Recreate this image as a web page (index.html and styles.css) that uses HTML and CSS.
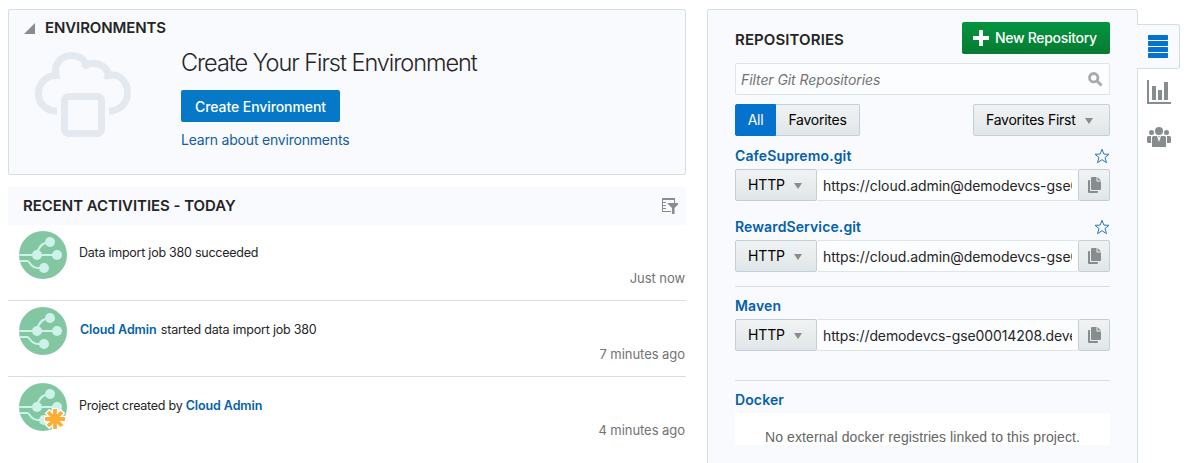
FILE: index.html
```html
<!DOCTYPE html>
<html lang="en">
<head>
<meta charset="utf-8">
<title>Project Home</title>
<link rel="stylesheet" href="styles.css">
</head>
<body>
<svg class="defs" width="0" height="0" aria-hidden="true">
  <symbol id="activity" viewBox="0 0 48 48">
    <circle cx="24" cy="24" r="24" fill="#83c7a2"/>
    <g fill="none" stroke="#cdf2e9" stroke-width="2">
      <path d="M0.2 24H38M18 24C19 16 23 11.500 31 11M0.800 30H8.500C11 30 11 37 19 37H25"/>
    </g>
    <g fill="#cdf2e9"><circle cx="18" cy="24" r="5"/><circle cx="38" cy="24" r="5"/><circle cx="31" cy="11" r="5"/><circle cx="25" cy="37" r="5"/></g>
  </symbol>
  <symbol id="star" viewBox="0 0 16 16">
    <path d="M8 1.300L9.900 6.100L15 6.300L11 9.500L12.500 14.700L8 11.700L3.500 14.700L5 9.500L1 6.300L6.100 6.100Z" fill="none" stroke="#2b78b5" stroke-width="1"/>
  </symbol>
  <symbol id="copy" viewBox="0 0 13 16">
    <path d="M3 1Q3 0 4 0H8.500V4.500H13V12Q13 13 12 13H4Q3 13 3 12ZM9.500 0L13 3.500H9.500ZM0 4Q0 3 1 3H2V14H10V15Q10 16 9 16H1Q0 16 0 15Z" fill="#878c8e"/>
  </symbol>
</svg>
<div class="page">
  <main class="main">
    <section class="environments">
      <h2 class="heading env-heading"><svg class="disclosure" width="11" height="11" viewBox="0 0 11 11"><path d="M11 0V11H0Z" fill="#878c8e"/></svg><span>ENVIRONMENTS</span></h2>
      <div class="env-body">
        <svg class="cloud" width="98" height="88" viewBox="0 0 98 88">
          <g fill="none" stroke="#e4e9ef" stroke-width="7">
            <path d="M23 60C11 60 4.500 52 4.500 42.500C4.500 32 12.500 24.500 22 24.500C19 12 28 4.500 38 4.500C45 4.500 50 8.500 52.500 14C61 10 73 14 74.500 24.500C86 22 93.500 31 93.500 42C93.500 52 86 60 75 60"/>
            <path d="M22 28C19.500 22 19 18 21 14M48.500 16C52 13 56 12.500 59 12.500M70 27.500C73 24 77 23.500 80 24.500" stroke-width="3"/>
            <rect x="30.500" y="45.500" width="37" height="37" rx="4"/>
          </g>
        </svg>
        <div class="env-copy">
          <h1 class="env-title">Create Your First Environment</h1>
          <button class="btn-create">Create Environment</button>
          <a class="learn">Learn about environments</a>
        </div>
      </div>
    </section>
    <section>
      <header class="activity-header">
        <h2 class="heading recent">RECENT ACTIVITIES - TODAY</h2>
        <svg width="16" height="16" viewBox="0 0 16 16"><g fill="#878c8e"><path d="M0 0H13V5H12V2H1V13H9V14H0Z"/><path d="M1 4H4V5H1ZM1 7H4V8H1ZM1 10H4V11H1Z"/><path d="M5.500 5H16V6.500L12.500 10V16H10V10L5.500 5.500Z"/></g></svg>
      </header>
      <article class="activity">
        <svg class="avatar"><use href="#activity"/></svg>
        <p class="message">Data import job 380 succeeded</p>
        <time class="when">Just now</time>
      </article>
      <article class="activity">
        <svg class="avatar"><use href="#activity"/></svg>
        <p class="message author-first"><a class="user">Cloud Admin</a> started data import job 380</p>
        <time class="when">7 minutes ago</time>
      </article>
      <article class="activity last">
        <svg class="avatar" viewBox="0 0 48 48"><use href="#activity"/>
          <g fill="none"><path d="M36 25V47M25 36H47M28 28L44 44M44 28L28 44" stroke="#fff" stroke-width="6.500"/><circle cx="36" cy="36" r="9" fill="#fff"/><path d="M36 26V46M26 36H46M29 29L43 43M43 29L29 43" stroke="#ffae35" stroke-width="3.800"/></g>
        </svg>
        <p class="message created">Project created by <a class="user">Cloud Admin</a></p>
        <time class="when">4 minutes ago</time>
      </article>
    </section>
  </main>
  <aside class="repos">
    <header class="repos-header">
      <h2 class="heading repos-heading">REPOSITORIES</h2>
      <button class="btn-new"><svg width="16" height="16" viewBox="0 0 16 16"><path d="M8 0V16M0 8H16" stroke="#fff" stroke-width="4"/></svg><span>New Repository</span></button>
    </header>
    <div class="search"><span class="placeholder">Filter Git Repositories</span><svg width="15" height="15" viewBox="0 0 15 15" fill="none" stroke="#a8aaab"><circle cx="5.700" cy="5.700" r="4.200" stroke-width="2.800"/><path d="M8.800 8.800L13.500 13.500" stroke-width="3"/></svg></div>
    <div class="filters">
      <div class="segmented"><button class="seg active">All</button><button class="seg fav">Favorites</button></div>
      <button class="btn sort"><span>Favorites First</span><i class="caret"></i></button>
    </div>
    <div class="repo">
      <div class="repo-title"><a>CafeSupremo.git</a><svg width="16" height="16"><use href="#star"/></svg></div>
      <div class="clone"><button class="btn protocol"><span>HTTP</span><i class="caret"></i></button><div class="url"><span class="url-text">https://cloud.admin@demodevcs-gse0</span></div><button class="btn copy"><svg width="13" height="16"><use href="#copy"/></svg></button></div>
    </div>
    <div class="repo second">
      <div class="repo-title"><a>RewardService.git</a><svg width="16" height="16"><use href="#star"/></svg></div>
      <div class="clone"><button class="btn protocol"><span>HTTP</span><i class="caret"></i></button><div class="url"><span class="url-text">https://cloud.admin@demodevcs-gse0</span></div><button class="btn copy"><svg width="13" height="16"><use href="#copy"/></svg></button></div>
    </div>
    <div class="repo maven">
      <div class="repo-title"><a>Maven</a></div>
      <div class="clone"><button class="btn protocol"><span>HTTP</span><i class="caret"></i></button><div class="url"><span class="url-text url-maven">https://demodevcs-gse00014208.deve</span></div><button class="btn copy"><svg width="13" height="16"><use href="#copy"/></svg></button></div>
    </div>
    <div class="repo docker">
      <div class="repo-title"><a>Docker</a></div>
      <div class="empty">No external docker registries linked to this project.</div>
    </div>
  </aside>
  <nav class="rail">
    <a class="tab current"><svg width="20" height="23" viewBox="0 0 20 23" fill="#0572ce"><rect width="20" height="5" rx=".7"/><rect y="6" width="20" height="5" rx=".7"/><rect y="12" width="20" height="5" rx=".7"/><rect y="18" width="20" height="5" rx=".7"/></svg></a>
    <a class="tab"><svg width="24" height="24" viewBox="0 0 24 24" fill="#878c8e"><path d="M0 0H2V22H24V24H0ZM5 6H9V20H5ZM11 10H15V20H11ZM17 2H21V20H17Z"/></svg></a>
    <a class="tab people"><svg width="24" height="20" viewBox="0 0 24 20" fill="#878c8e"><circle cx="12" cy="4" r="4"/><circle cx="4.500" cy="5.500" r="2.500"/><circle cx="19.500" cy="5.500" r="2.500"/><path d="M6.500 9H10L12 15L14 9H17.500Q19 9 19 10.500V20H5V10.500Q5 9 6.500 9ZM1.500 9H4V16H1.500Q0 16 0 14.500V10.500Q0 9 1.500 9ZM20 9H22.500Q24 9 24 10.500V14.500Q24 16 22.500 16H20ZM11.300 9H12.700L12.300 10.500H11.700Z"/></svg></a>
  </nav>
</div>
</body>
</html>
```
FILE: styles.css
```css
* { box-sizing: border-box; }
body { margin: 0; background: #fff; color: #252525; font: 14px/20px Inter, "Liberation Sans", sans-serif; }
h1, h2, p { margin: 0; }
button { font: inherit; margin: 0; padding: 0; }
svg { display: block; flex: none; }
.defs { position: absolute; }
.page { display: flex; height: 463px; padding: 9px 0 0 8px; overflow: hidden; }
.main { width: 678px; margin-right: 21px; }
.heading { font-size: 15px; line-height: 20px; font-weight: 600; white-space: nowrap; }

.environments { height: 166px; margin-bottom: 12px; border: 1px solid #d2dfe4; border-radius: 2px; background: #f9fafe; }
.env-heading { display: flex; align-items: center; gap: 10px; padding: 8px 0 0 15px; letter-spacing: -0.1px; }
.disclosure { margin-top: 1px; }
.env-body { display: flex; padding: 12px 0 0 25px; }
.cloud { margin-top: 1px; }
.env-copy { display: flex; flex-direction: column; align-items: flex-start; padding-left: 49px; }
.env-title { font-size: 23.500px; line-height: 28px; font-weight: 300; letter-spacing: -1.040px; white-space: nowrap; margin-top: -1px; }
.btn-create { width: 159px; height: 32px; margin: 13px 0 8px; border: 0; border-radius: 2px; background: #0579c7; color: #fff; font-weight: 500; letter-spacing: -0.08px; padding-top: 2px; white-space: nowrap; }
.learn { color: #145c9e; letter-spacing: -0.2px; white-space: nowrap; }

.activity-header { display: flex; justify-content: space-between; align-items: center; height: 38px; padding: 0 8px 0 15px; background: #f9fafe; }
.recent { letter-spacing: -0.04px; }
.activity { display: flex; height: 76px; padding: 6px 1px 0 11px; border-bottom: 1px solid #d2dfe4; }
.activity.last { border: 0; }
.avatar { width: 48px; height: 48px; }
.message { flex: 1; padding: 12px 0 0 12px; font-size: 12.500px; letter-spacing: -0.25px; white-space: nowrap; }
.author-first { padding: 13px 0 0 13px; letter-spacing: -0.2px; }
.author-first .user { margin-right: 1px; }
.created { padding-top: 13px; }
.user { color: #045fab; font-weight: 600; letter-spacing: -0.1px; }
.when { align-self: flex-end; margin-bottom: 12px; font-size: 13px; letter-spacing: -0.05px; color: #737373; white-space: nowrap; }
.last .when { margin-bottom: 13px; }

.repos { width: 431px; height: 470px; padding: 12px 27px 0; border: 1px solid #d2dfe4; border-radius: 2px 3px 0 0; background: #f9fafe; }
.repos-header { display: flex; justify-content: space-between; align-items: center; height: 32px; }
.repos-heading { padding-top: 3px; letter-spacing: 0.1px; }
.btn-new { display: flex; align-items: center; gap: 6px; width: 148px; height: 32px; padding-left: 11px; border: 0; border-radius: 2px; background: linear-gradient(#039540, #067b32); color: #fff; font-weight: 500; letter-spacing: -0.3px; white-space: nowrap; }
.search { display: flex; align-items: center; justify-content: space-between; height: 32px; margin: 9px 0; padding: 0 6px 0 5px; border: 1px solid #dfe4e7; border-radius: 2px; background: #fcfdfe; }
.placeholder { padding-top: 1px; color: #737373; font-style: italic; letter-spacing: -0.08px; white-space: nowrap; }
.filters { display: flex; justify-content: space-between; }
.segmented { display: flex; }
.seg, .btn { height: 32px; border: 1px solid #c4ced7; border-radius: 2px; background: linear-gradient(#f1f3f3, #e0e6e8); color: #000; letter-spacing: -0.25px; white-space: nowrap; }
.seg.active { width: 41px; background: #0572ce; border-color: #0572ce; color: #fff; border-radius: 2px 0 0 2px; }
.seg.fav { width: 84px; border-left: 0; border-radius: 0 2px 2px 0; }
.btn { display: flex; align-items: center; }
.sort { width: 137px; padding-left: 12px; gap: 9px; }
.caret { width: 0; height: 0; border: 4.500px solid transparent; border-top: 6px solid #878c8e; border-bottom: 0; margin-top: 1px; }
.repo { padding-top: 10px; }
.repo-title { display: flex; justify-content: space-between; align-items: center; height: 20px; margin-bottom: 3px; color: #045fab; font-weight: 600; letter-spacing: 0.12px; white-space: nowrap; }
.second { padding-top: 16px; }
.maven { margin-top: 14px; padding-top: 9px; border-top: 1px solid #d2dfe4; }
.docker { margin-top: 29px; padding-top: 9px; border-top: 1px solid #d2dfe4; }
.clone { display: flex; }
.protocol { width: 82px; padding-left: 12px; gap: 9px; letter-spacing: -0.15px; }
.url { flex: 1; min-width: 0; height: 32px; padding: 6px 6px 0; border: 1px solid #dfe4e7; border-left: 0; border-right: 0; background: #fcfdfe; }
.url-text { display: block; overflow: hidden; letter-spacing: -0.05px; white-space: nowrap; }
.url-maven { letter-spacing: -0.1px; }
.copy { width: 32px; justify-content: center; }
.empty { height: 32px; padding-top: 15px; overflow: hidden; background: #fff; color: #666; font: 14px/18px "Liberation Sans", sans-serif; letter-spacing: 0.1px; text-align: center; white-space: nowrap; }

.rail { width: 43px; margin-left: -1px; padding-top: 15px; }
.tab { display: flex; justify-content: flex-start; align-items: center; height: 45px; padding-left: 10px; }
.current { border: 1px solid #d2dfe4; border-left: 0; border-radius: 0 3px 3px 0; background: #f9fafe; padding-left: 11px; }
```
